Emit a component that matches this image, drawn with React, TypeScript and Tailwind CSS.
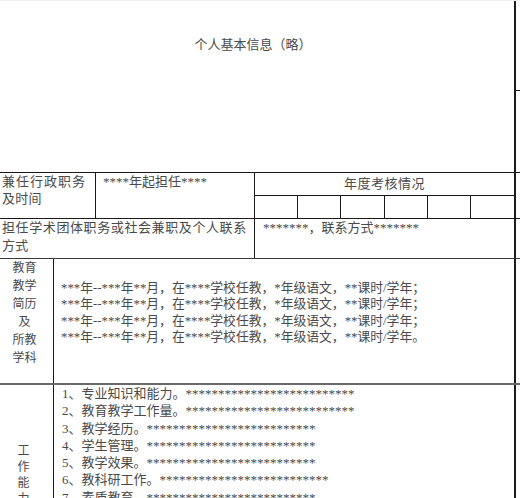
const font = { fontFamily: '"Liberation Serif", "Noto Sans CJK SC", serif' };

const teaching = [
  '***年--***年**月，在****学校任教，*年级语文，**课时/学年；',
  '***年--***年**月，在****学校任教，*年级语文，**课时/学年；',
  '***年--***年**月，在****学校任教，*年级语文，**课时/学年；',
  '***年--***年**月，在****学校任教，*年级语文，**课时/学年。',
];

const stars = '**************************';

const abilities = [
  '1、专业知识和能力。' + stars,
  '2、教育教学工作量。' + stars,
  '3、教学经历。' + stars,
  '4、学生管理。' + stars,
  '5、教学效果。' + stars,
  '6、教科研工作。' + stars,
  '7、素质教育。' + stars,
];

function Strip({ tick }: { tick?: number }) {
  return (
    <div className="w-[6px] shrink-0 border-l-2 border-[#1a1a1a]">
      {tick ? <div className="h-[90px] border-b border-[#1a1a1a]" /> : null}
    </div>
  );
}

export default function App() {
  return (
    <div
      className="w-[520px] h-[498px] overflow-hidden bg-white text-[13px] text-[#4a4a4a] flex flex-col"
      style={font}
    >
      {/* top block */}
      <div className="h-[172px] flex shrink-0 border-t border-[#f0f0f0]">
        <div className="w-[514px] flex justify-center pt-[35px] pr-[8px]">
          <span className="leading-[18px]">个人基本信息（略）</span>
        </div>
        <Strip tick={90} />
      </div>

      {/* 兼任行政职务 */}
      <div className="h-[46px] flex shrink-0 border-t border-[#1a1a1a]">
        <div className="w-[514px] flex">
          <div className="w-[96px] border-r border-[#1a1a1a] pl-[2px] leading-[17px]">
            <div className="tracking-[1px]">兼任行政职务</div>
            <div className="tracking-[0.3px]">及时间</div>
          </div>
          <div className="w-[159px] border-r border-[#1a1a1a] pl-[7px] leading-[18px]">
            ****年起担任****
          </div>
          <div className="flex-1 flex flex-col">
            <div className="h-[22px] flex items-center justify-center tracking-[0.5px]">
              年度考核情况
            </div>
            <div className="flex-1 grid grid-cols-6 border-t border-[#1a1a1a]">
              <div className="border-r border-[#1a1a1a]" />
              <div className="border-r border-[#1a1a1a]" />
              <div className="border-r border-[#1a1a1a]" />
              <div className="border-r border-[#1a1a1a]" />
              <div className="border-r border-[#1a1a1a]" />
              <div />
            </div>
          </div>
        </div>
        <Strip />
      </div>

      {/* 学术团体 */}
      <div className="h-[40px] flex shrink-0 border-t border-[#1a1a1a]">
        <div className="w-[514px] flex">
          <div className="w-[255px] border-r border-[#1a1a1a] pl-[2px] leading-[18px]">
            <div className="tracking-[0.6px]">担任学术团体职务或社会兼职及个人联系</div>
            <div className="tracking-[0.3px]">方式</div>
          </div>
          <div className="flex-1 pl-[8px] leading-[18px]">*******，联系方式*******</div>
        </div>
        <Strip />
      </div>

      {/* 教育教学简历 */}
      <div className="h-[125px] flex shrink-0 border-t border-[#3a3a3a]">
        <div className="w-[514px] flex">
          <div className="w-[54px] border-r border-[#1a1a1a] flex flex-col items-center text-[12px] leading-[18px] pr-[4px]">
            <span>教育</span>
            <span>教学</span>
            <span>简历</span>
            <span>及</span>
            <span>所教</span>
            <span>学科</span>
          </div>
          <div className="flex-1 pl-[7px] pt-[21px] text-[12.8px] leading-[16.3px] whitespace-nowrap">
            {teaching.map((t, i) => (
              <div key={i}>{t}</div>
            ))}
          </div>
        </div>
        <Strip />
      </div>

      {/* 工作能力 */}
      <div className="flex-1 flex border-t-2 border-[#6a6a6a]">
        <div className="w-[514px] flex">
          <div className="w-[54px] border-r border-[#1a1a1a] flex flex-col items-center pt-[58px] text-[12px] leading-[16px] pr-[6px]">
            <span>工</span>
            <span>作</span>
            <span>能</span>
            <span>力</span>
          </div>
          <div className="flex-1 pl-[8px] text-[13px] leading-[17.3px] whitespace-nowrap">
            {abilities.map((t, i) => (
              <div key={i}>{t}</div>
            ))}
          </div>
        </div>
        <Strip />
      </div>
    </div>
  );
}
